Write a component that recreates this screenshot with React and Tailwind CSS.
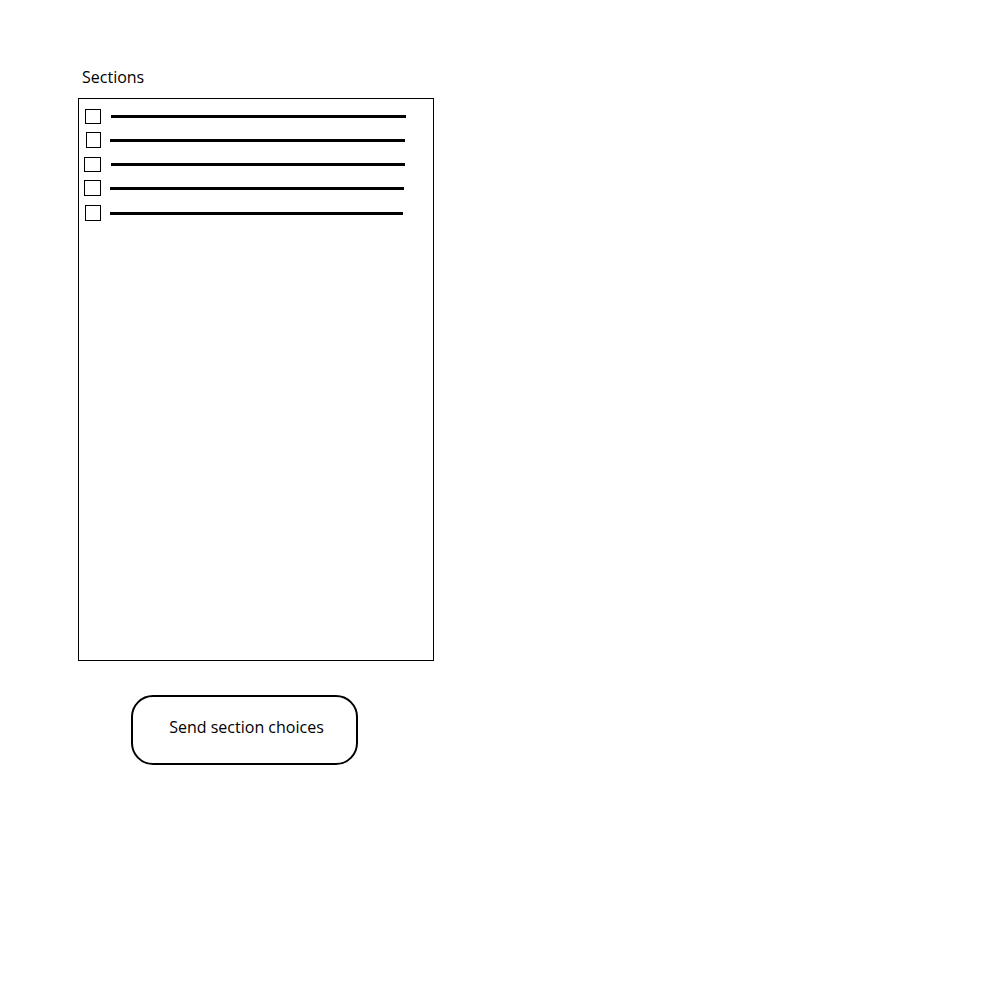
const rows = [
  { row: "mt-0", box: "ml-[6px] w-[16px] h-[15px]", line: "ml-[10px] w-[295px] mt-[6px]" },
  { row: "mt-[7px]", box: "ml-[7px] w-[15px] h-[16px]", line: "ml-[9px] w-[295px] mt-[7px]" },
  { row: "mt-[9px]", box: "ml-[5px] w-[17px] h-[15px]", line: "ml-[10px] w-[294px] mt-[6px]" },
  { row: "mt-[7px]", box: "ml-[5px] w-[17px] h-[16px]", line: "ml-[9px] w-[294px] mt-[7px]" },
  { row: "mt-[9px]", box: "ml-[6px] w-[16px] h-[16px]", line: "ml-[9px] w-[293px] mt-[7px]" },
];

const App = () => {
  return (
    <div className="min-h-screen bg-white pl-[78px] pt-[67px] font-['Open_Sans',sans-serif] text-black">
      {/* Title */}
      <div className="ml-[4px] text-[16px] leading-[20px]">Sections</div>

      {/* Section list */}
      <div className="mt-[11px] w-[356px] h-[563px] border border-black pt-[10px]">
        {rows.map((r, i) => (
          <div key={i} className={`flex items-start h-[16px] ${r.row}`}>
            <div className={`border border-black ${r.box}`}></div>
            <div className={`h-[3px] bg-black ${r.line}`}></div>
          </div>
        ))}
      </div>

      {/* Button */}
      <button className="mt-[34px] ml-[53px] w-[227px] h-[70px] border-2 border-black rounded-[22px] bg-white text-[16px] pb-[6px] pl-[4px] flex items-center justify-center">
        Send section choices
      </button>
    </div>
  );
};

export default App;
